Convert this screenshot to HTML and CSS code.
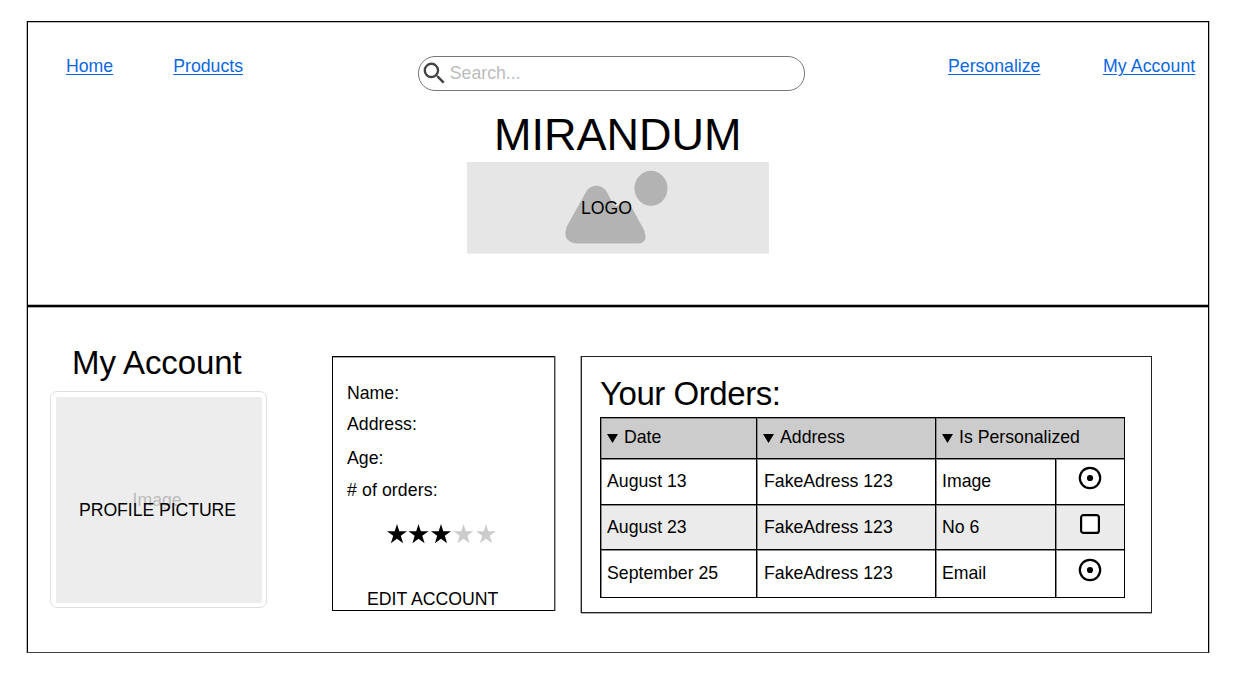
FILE: index.html
```html
<!DOCTYPE html>
<html lang="en">
<head>
<meta charset="utf-8">
<title>Mirandum - My Account</title>
<link rel="stylesheet" href="styles.css">
</head>
<body>
<div class="frame">
  <header class="header">
    <nav class="nav">
      <a class="link link-home" href="#">Home</a>
      <a class="link link-products" href="#">Products</a>
    </nav>
    <div class="brand">
      <div class="search">
        <svg class="search-icon" viewBox="0 0 24 24"><path d="M15.5 14h-.79l-.28-.27A6.47 6.47 0 0 0 16 9.5 6.5 6.5 0 1 0 9.5 16c1.61 0 3.09-.59 4.23-1.57l.27.28v.79l5 4.99L20.49 19l-4.99-5zm-6 0C7.01 14 5 11.99 5 9.5S7.01 5 9.5 5 14 7.01 14 9.5 11.99 14 9.5 14z"/></svg>
        <span class="search-text">Search...</span>
      </div>
      <h1 class="title">MIRANDUM</h1>
      <div class="logo">
        <svg class="logo-art" viewBox="0 0 302 91"><path d="M118.500 31C123 22 135 21 140.500 31L146 42Q149 46 152 43Q159 37 165 46L177 68Q182 81 171 81.500H110Q94 80 100 64Z"/><ellipse cx="184" cy="26.300" rx="16.500" ry="17.500"/></svg>
        <span class="logo-label">LOGO</span>
      </div>
    </div>
    <nav class="nav nav-right">
      <a class="link" href="#">Personalize</a>
      <a class="link link-account" href="#">My Account</a>
    </nav>
  </header>
  <main class="main">
    <section class="profile">
      <h2 class="heading">My Account</h2>
      <div class="picture">
        <div class="picture-fill">
          <span class="picture-placeholder">Image</span>
          <span class="picture-label">PROFILE PICTURE</span>
        </div>
      </div>
    </section>
    <section class="details">
      <p class="field">Name:</p>
      <p class="field">Address:</p>
      <p class="field field-age">Age:</p>
      <p class="field field-orders"># of orders:</p>
      <svg class="stars" viewBox="0 0 110 20">
        <defs><path id="star" d="M10 0L12.300 7.200H20L13.800 11.700 16.100 19.200 10 14.700 3.900 19.200 6.200 11.700 0 7.200H7.700Z"/></defs>
        <use href="#star" x="0"/><use href="#star" x="21.500"/><use href="#star" x="44"/>
        <g class="star-off"><use href="#star" x="66.500"/><use href="#star" x="89"/></g>
      </svg>
      <p class="edit">EDIT ACCOUNT</p>
    </section>
    <section class="orders">
      <h2 class="heading">Your Orders:</h2>
      <div class="table">
        <div class="cell head"><i class="sort"></i>Date</div>
        <div class="cell head"><i class="sort"></i>Address</div>
        <div class="cell head wide"><i class="sort"></i>Is Personalized</div>
        <div class="cell">August 13</div>
        <div class="cell address">FakeAdress 123</div>
        <div class="cell">Image</div>
        <div class="cell control"><svg class="mark" viewBox="0 0 24 24"><circle class="ring" cx="12" cy="12" r="10.200"/><circle cx="12" cy="12" r="3.100"/></svg></div>
        <div class="cell alt">August 23</div>
        <div class="cell alt address">FakeAdress 123</div>
        <div class="cell alt">No 6</div>
        <div class="cell alt control"><svg class="mark" viewBox="0 0 24 24"><rect class="ring box" x="3.100" y="3.100" width="17.800" height="17.800" rx="2.500"/></svg></div>
        <div class="cell last">September 25</div>
        <div class="cell last address">FakeAdress 123</div>
        <div class="cell last">Email</div>
        <div class="cell control last-control"><svg class="mark" viewBox="0 0 24 24"><circle class="ring" cx="12" cy="12" r="10.200"/><circle cx="12" cy="12" r="3.100"/></svg></div>
      </div>
    </section>
  </main>
</div>
</body>
</html>
```
FILE: styles.css
```css
* { box-sizing: border-box; }
body {
  margin: 0;
  padding: 21px 0 0 27px;
  background: #fff;
  color: #000;
  font: 17.7px/20px "Liberation Sans", Arial, sans-serif;
}
h1, h2, p { margin: 0; font-weight: normal; white-space: nowrap; }
.frame {
  width: 1182px;
  height: 632px;
  border: 1px solid #000;
  border-bottom-color: #444;
  box-shadow: -1px 0 #bbb, 1px 0 #bbb, 0 1px #888, inset 0 1px #bbb;
}
.header {
  display: flex;
  height: 285px;
  border-bottom: 2px solid #000;
  box-shadow: 0 1px #aaa, inset 0 -1px #bbb;
}
.nav { display: flex; flex: none; width: 390px; padding: 34px 0 0 38px; }
.link {
  height: 20px;
  color: #0b68e0;
  text-decoration: underline;
  text-decoration-thickness: 1px;
  text-underline-offset: 2px;
  white-space: nowrap;
}
.link-products { margin-left: 60px; }
.nav-right { padding-left: 143px; }
.link-account { margin-left: 62.5px; letter-spacing: 0.1px; }
.brand { flex: none; width: 387px; padding-top: 34px; }
.search {
  display: flex;
  height: 35px;
  border: 1px solid #777;
  border-radius: 17px;
}
.search-icon { width: 28.8px; height: 28.8px; margin: 2px 0 0 1px; fill: #444; flex: none; }
.search-text { margin: 6px 0 0 1px; color: #bcbcbc; }
.title { height: 71px; padding: 19px 0 0 76px; font-size: 45px; line-height: 50px; }
.logo { position: relative; width: 302px; height: 91px; margin-left: 49px; background: #e6e6e6; box-shadow: 0 1px #f0f0f0; }
.logo-art { display: block; width: 302px; height: 91px; fill: #b3b3b3; }
.logo-label { position: absolute; left: 114px; top: 36px; }

.main { display: flex; height: 345px; }
.profile { width: 304px; padding: 36px 0 0 21.5px; }
.heading { height: 48px; padding-left: 22.5px; font-size: 33px; line-height: 40px; letter-spacing: -0.1px; }
.picture { width: 217px; height: 217px; padding: 4px; border: 1px solid #dedede; border-radius: 7px; }
.picture-fill { position: relative; margin: 1px 0 0 1px; width: 206px; height: 206px; background: #ededed; border-radius: 2px; }
.picture-placeholder { position: absolute; left: 77px; top: 93px; color: #bbb; }
.picture-label { position: absolute; left: 23.5px; top: 103px; letter-spacing: -0.08px; white-space: nowrap; }
.details {
  width: 223px;
  height: 255px;
  margin: 49px 26px 0 0;
  padding: 26px 0 0 14px;
  border: 1px solid #000;
  border-right-color: #444;
  box-shadow: 1px 0 #aaa, inset 0 1px #aaa;
}
.field { margin-bottom: 11px; }
.field-age { margin: 14px 0 12px; }
.field-orders { letter-spacing: 0.1px; }
.stars { display: block; width: 110px; height: 20px; margin: 24px 0 0 39.5px; }
.star-off { fill: #ccc; }
.edit { margin: 45px 0 0 20px; }
.orders {
  width: 571px;
  height: 257px;
  margin-top: 49px;
  padding: 17px 0 0 18px;
  border: 1px solid #222;
  box-shadow: -1px 0 #aaa, 0 1px #aaa;
}
.orders .heading { height: 43px; padding: 0; letter-spacing: -0.45px; }
.table {
  display: grid;
  grid-template-columns: 156px 179px 120px 69px;
  grid-template-rows: 41px 46px 45px 48px;
  width: 525px;
  border-right: 1px solid #000;
  border-bottom: 1px solid #000;
}
.cell {
  padding: 12px 0 0 6px;
  border-top: 1px solid #000;
  border-left: 1px solid #000;
  box-shadow: inset 1px 1px #888;
  white-space: nowrap;
}
.address { padding-left: 7px; }
.last { padding-top: 13px; }
.head { display: flex; padding-top: 9px; background: #ccc; }
.wide { grid-column: span 2; }
.alt { background: #ebebeb; }
.sort { width: 11px; height: 9px; margin: 7px 6px 0 0; background: #000; clip-path: polygon(0 0, 100% 0, 50% 100%); }
.control { padding: 7px 0 0 22px; }
.last-control { padding-top: 8px; }
.mark { display: block; width: 24px; height: 24px; }
.ring { fill: none; stroke: #000; stroke-width: 2.2; }
.box { fill: #fff; }
```
